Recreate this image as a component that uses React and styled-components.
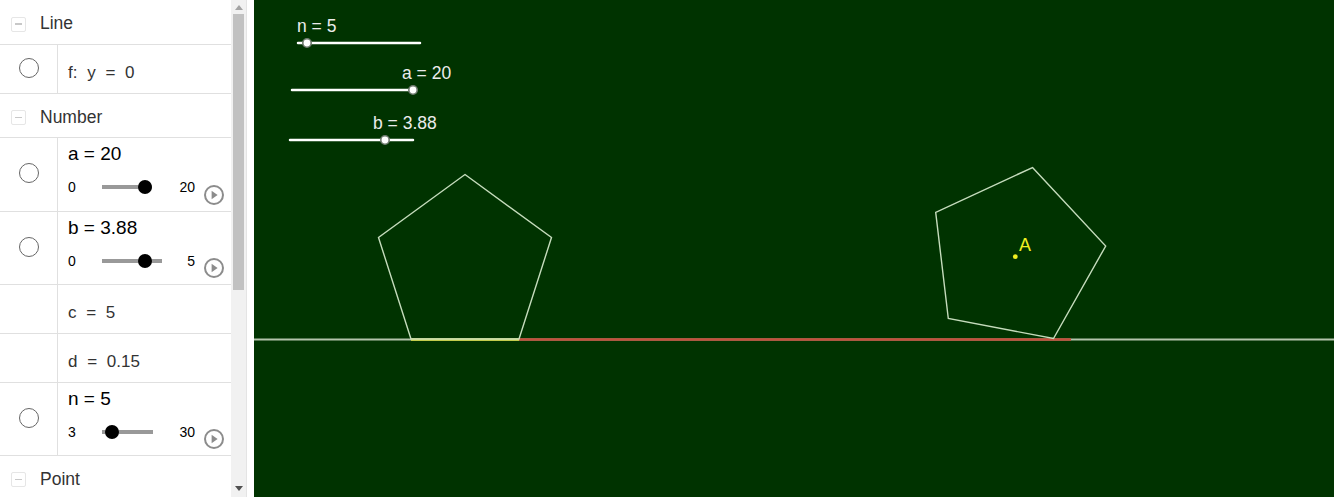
import React from 'react'
import styled, { createGlobalStyle } from 'styled-components'

const Global = createGlobalStyle`
  html, body { margin:0; padding:0; overflow:hidden; }
  body { font-family:"Liberation Sans", Arial, sans-serif; }
`;

const Page = styled.div`
  display:flex;
  width:1334px;
  height:497px;
`;

const Sidebar = styled.div`
  width:254px;
  flex:none;
  display:flex;
  background:#fff;
`;

const List = styled.div`
  width:231px;
  height:497px;
  overflow:hidden;
`;

const Scrollbar = styled.div`
  width:15px;
  background:#f1f1f1;
  border-right:1px solid #e4e4e4;
  display:flex;
  flex-direction:column;
  align-items:center;
`;

const Arrow = styled.div`
  width:0;
  height:0;
  margin:${p => (p.$down ? '0 0 6px' : '5px 0 4px')};
  border-left:4px solid transparent;
  border-right:4px solid transparent;
  ${p => (p.$down
    ? 'border-top:5px solid #505050;'
    : 'border-bottom:5px solid #a3a3a3;')}
`;

const Thumb = styled.div`
  width:11px;
  height:276px;
  background:#c1c1c1;
`;

const Spacer = styled.div`
  flex:1;
`;

const Header = styled.div`
  height:${p => p.$h || 44}px;
  display:flex;
  align-items:center;
  padding:3px 0 0 11px;
  gap:14px;
  border-bottom:1px solid #e0e0e0;
  box-sizing:border-box;
  color:#333;
  font-size:17.5px;
`;

const Toggle = styled.div`
  width:13px;
  height:13px;
  border:1px solid #e6e6e6;
  border-radius:2px;
  display:flex;
  align-items:center;
  justify-content:center;
  margin-top:1px;
  &::after{
    content:'';
    width:7px;
    height:1.5px;
    background:#c8c8c8;
  }
`;

const Row = styled.div`
  display:grid;
  grid-template-columns:57px 1fr;
  height:${p => p.$h}px;
  border-bottom:1px solid #e0e0e0;
  box-sizing:border-box;
`;

const Marble = styled.div`
  display:flex;
  align-items:center;
  justify-content:center;
  padding-bottom:3px;
  &::after{
    content:'';
    display:${p => (p.$show ? 'block' : 'none')};
    width:18px;
    height:18px;
    border:1px solid #666;
    border-radius:50%;
  }
`;

const Body = styled.div`
  border-left:1px solid #e0e0e0;
  padding:${p => (p.$slider ? '5px' : '17px')} 0 0 10px;
  position:relative;
`;

const Plain = styled.div`
  font-size:17px;
  color:#333;
  line-height:22px;
  word-spacing:5px;
`;

const Title = styled.div`
  font-size:19px;
  line-height:22px;
  color:#000;
`;

const SliderLine = styled.div`
  display:flex;
  align-items:center;
  height:22px;
  margin-top:11px;
  font-size:14px;
  color:#000;
`;

const MinLabel = styled.span`
  width:34px;
`;

const Track = styled.div`
  position:relative;
  width:${p => p.$w}px;
  height:4px;
  background:#999;
`;

const Knob = styled.div`
  position:absolute;
  top:-5px;
  width:14px;
  height:14px;
  border-radius:50%;
  background:#000;
`;

const MaxLabel = styled.span`
  position:absolute;
  right:36px;
`;

const PlayButton = styled.svg`
  position:absolute;
  right:6px;
  bottom:${p => p.$b}px;
`;

const Canvas = styled.div`
  flex:1;
  background:#003300;
  overflow:hidden;
`;

const Play = ({ b }) => (
  <PlayButton $b={b} width="22" height="22" viewBox="0 0 22 22">
    <circle cx="11" cy="11" r="9" fill="none" stroke="#8c8c8c" strokeWidth="2" />
    <path d="M8.6 6.8 L14.6 11 L8.6 15.2 Z" fill="#8c8c8c" />
  </PlayButton>
);

const Slider = ({ title, min, max, value, w, h }) => {
  const frac = (value - min) / (max - min);
  const left = frac * (w - 14);
  return (
    <Row $h={h}>
      <Marble $show />
      <Body $slider>
        <Title>{title}</Title>
        <SliderLine>
          <MinLabel>{min}</MinLabel>
          <Track $w={w}>
            <Knob style={{ left }} />
          </Track>
          <MaxLabel>{max}</MaxLabel>
        </SliderLine>
        <Play b={5} />
      </Body>
    </Row>
  );
};

const Text = ({ row, marble, children }) => (
  <Row $h={row}>
    <Marble $show={marble} />
    <Body>
      <Plain>{children}</Plain>
    </Body>
  </Row>
);

const pts = a => a.map(p => p.join(',')).join(' ');

const GraphicSlider = ({ x1, x2, y, knob, label, lx }) => (
  <g>
    <line x1={x1} y1={y} x2={x2} y2={y} stroke="#fff" strokeWidth="2.5" strokeLinecap="round" />
    <circle cx={knob} cy={y} r="4.2" fill="#fff" stroke="#6e7a6e" strokeWidth="1.6" />
    <text x={lx} y={y - 11} fill="#ececec" fontSize="17.5" fontFamily="Liberation Sans, Arial, sans-serif">{label}</text>
  </g>
);

const Graphics = () => (
  <svg width="1080" height="497" viewBox="0 0 1080 497">
    <GraphicSlider x1={44} x2={166} y={43} knob={53} label="n = 5" lx={43} />
    <GraphicSlider x1={38} x2={160} y={90} knob={159} label="a = 20" lx={148} />
    <GraphicSlider x1={36} x2={159} y={140} knob={131} label="b = 3.88" lx={119} />

    <line x1="0" y1="339.5" x2="1080" y2="339.5" stroke="#b4c4ac" strokeWidth="2" />
    <line x1="157" y1="339.5" x2="265" y2="339.5" stroke="#e6e64a" strokeWidth="2.5" />
    <line x1="265" y1="339.5" x2="817" y2="339.5" stroke="#c44f3c" strokeWidth="2.5" />

    <polygon
      points={pts([[211, 174.5], [297.5, 237.5], [265, 339], [157, 339], [124.5, 237.5]])}
      fill="none" stroke="#c5dcbc" strokeWidth="1.4" />
    <polygon
      points={pts([[778.5, 167.5], [851.7, 246], [799.5, 338.5], [694.3, 318.5], [681.7, 212.3]])}
      fill="none" stroke="#c5dcbc" strokeWidth="1.4" />

    <circle cx="761.3" cy="256.7" r="2.4" fill="#f0f020" />
    <text x="765" y="251" fill="#f0f020" fontSize="18" fontFamily="Liberation Sans, Arial, sans-serif">A</text>
  </svg>
);

export default function App() {
  return (
    <Page>
      <Global />
      <Sidebar>
        <List>
          <Header $h={45}><Toggle />Line</Header>
          <Text row={49} marble>f: y = 0</Text>
          <Header><Toggle />Number</Header>
          <Slider title="a = 20" min={0} max={20} value={20} w={50} h={74} />
          <Slider title="b = 3.88" min={0} max={5} value={3.88} w={60} h={73} />
          <Text row={49}>c = 5</Text>
          <Text row={49}>d = 0.15</Text>
          <Slider title="n = 5" min={3} max={30} value={5} w={51} h={73} />
          <Header><Toggle />Point</Header>
        </List>
        <Scrollbar>
          <Arrow />
          <Thumb />
          <Spacer />
          <Arrow $down />
        </Scrollbar>
      </Sidebar>
      <Canvas>
        <Graphics />
      </Canvas>
    </Page>
  );
}
